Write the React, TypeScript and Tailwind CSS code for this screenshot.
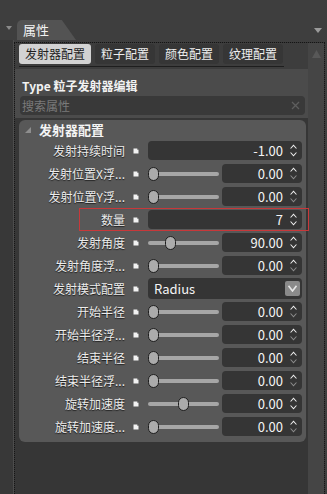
type Row = {
  label: string;
  kind: "num" | "slider" | "select";
  value: string;
  pos?: number;
  downOn?: boolean;
  focus?: boolean;
};

const rows: Row[] = [
  { label: "发射持续时间", kind: "num", value: "-1.00", downOn: true },
  { label: "发射位置X浮...", kind: "slider", value: "0.00", pos: 0 },
  { label: "发射位置Y浮...", kind: "slider", value: "0.00", pos: 0 },
  { label: "数量", kind: "num", value: "7", downOn: true, focus: true },
  { label: "发射角度", kind: "slider", value: "90.00", pos: 0.28, downOn: true },
  { label: "发射角度浮...", kind: "slider", value: "0.00", pos: 0 },
  { label: "发射模式配置", kind: "select", value: "Radius" },
  { label: "开始半径", kind: "slider", value: "0.00", pos: 0 },
  { label: "开始半径浮...", kind: "slider", value: "0.00", pos: 0 },
  { label: "结束半径", kind: "slider", value: "0.00", pos: 0 },
  { label: "结束半径浮...", kind: "slider", value: "0.00", pos: 0 },
  { label: "旋转加速度", kind: "slider", value: "0.00", pos: 0.5, downOn: true },
  { label: "旋转加速度...", kind: "slider", value: "0.00", pos: 0 },
];

function Spinner({ downOn }: { downOn?: boolean }) {
  return (
    <svg width="9" height="15" viewBox="0 0 9 15" className="shrink-0">
      <path d="M1 5.5 L4.5 1.5 L8 5.5 L6.8 5.5 L4.5 3 L2.2 5.5 Z" fill="#f0f0f0" />
      <path
        d="M1 9.5 L4.5 13.5 L8 9.5 L6.8 9.5 L4.5 12 L2.2 9.5 Z"
        fill={downOn ? "#f0f0f0" : "#8c8c8c"}
      />
    </svg>
  );
}

function NumBox({ value, downOn }: { value: string; downOn?: boolean }) {
  return (
    <div className="flex-1 h-[19px] bg-[#353535] rounded-[4px] flex items-center justify-end pr-[4px] gap-[6px]">
      <span className="text-[13px] text-[#f4f4f4] leading-none">{value}</span>
      <Spinner downOn={downOn} />
    </div>
  );
}

function Pin() {
  return (
    <svg width="6" height="6" viewBox="0 0 6 6" className="shrink-0">
      <path d="M0.5 0.5 L4 0.5 L5.5 2 L5.5 5.5 L0.5 5.5 Z" fill="#f2f2f2" />
      <path d="M4 0.5 L5.5 2 L4 2 Z" fill="#9a9a9a" />
    </svg>
  );
}

function Slider({ pos }: { pos: number }) {
  return (
    <div className="relative w-[71px] h-[14px] flex items-center shrink-0">
      <div className="w-full h-[4px] rounded-full bg-[#a6a6a6]" />
      <div
        className="absolute top-[0px] w-[11px] h-[14px] rounded-full bg-[#ababab] border border-[#1e1e1e]"
        style={{ left: `${pos * 60}px` }}
      />
    </div>
  );
}

function PropRow({ row }: { row: Row }) {
  return (
    <div className="relative h-[21px] flex items-center">
      <div className="w-[106px] text-right text-[12px] text-[#ececec] whitespace-nowrap [text-shadow:0_1px_1px_#1a1a1a]">
        {row.label}
      </div>
      <div className="w-[8px]" />
      <Pin />
      <div className="w-[9px]" />
      <div className="w-[154px] flex items-center gap-[3px]">
        {row.kind === "num" && <NumBox value={row.value} downOn={row.downOn} />}
        {row.kind === "slider" && (
          <>
            <Slider pos={row.pos ?? 0} />
            <NumBox value={row.value} downOn={row.downOn} />
          </>
        )}
        {row.kind === "select" && (
          <div className="flex-1 h-[21px] bg-[#353535] rounded-[4px] flex items-center pl-[6px] pr-[2px]">
            <span className="flex-1 text-[13px] text-[#f4f4f4]">{row.value}</span>
            <div className="w-[15px] h-[15px] rounded-[2px] bg-[#8a8a8a] flex items-center justify-center">
              <svg width="9" height="7" viewBox="0 0 9 7">
                <path d="M0.5 0.8 L4.5 6 L8.5 0.8" fill="none" stroke="#e6e6e6" strokeWidth="1.6" />
              </svg>
            </div>
          </div>
        )}
      </div>
      {row.focus && (
        <div className="absolute left-[60px] right-[-3px] top-[-1px] bottom-[-1px] border border-[#c8383a]" />
      )}
    </div>
  );
}

export default function App() {
  return (
    <div className="w-[327px] h-[494px] bg-[#3e3e3e] flex flex-col overflow-hidden font-['Noto_Sans_CJK_SC','Liberation_Sans',sans-serif]">
      {/* Top strip */}
      <div className="h-[20px] shrink-0" />
      <div className="h-[20px] shrink-0 flex items-end relative">
        <svg width="6" height="4" viewBox="0 0 6 4" className="absolute left-[6px] top-[6px]">
          <path d="M0 0 L6 0 L3 4 Z" fill="#8a8a8a" />
        </svg>
        <div className="ml-[17px] w-[59px] h-[20px] bg-[#535353] rounded-tl-[5px] [clip-path:polygon(0_0,76%_0,100%_100%,0_100%)] text-[13px] text-[#f2f2f2] pl-[6px] leading-[20px]">
          属性
        </div>
        <svg width="8" height="5" viewBox="0 0 8 5" className="absolute right-[5px] top-[8px]">
          <path d="M0 0 L8 0 L4 5 Z" fill="#9a9a9a" />
        </svg>
      </div>

      {/* Body */}
      <div className="flex-1 flex min-h-0">
        <div className="w-[14px] shrink-0 bg-[#383838] border-r border-[#4c4c4c]" />
        <div className="flex-1 flex border-l border-t border-r border-dotted border-[#151515] mt-[2px] mr-[2px] bg-[#363636]">
          {/* Main column */}
          <div className="w-[293px] flex flex-col">
            {/* Tabs */}
            <div className="h-[26px] bg-[#3d3d3d] pl-[4px] pr-[24px] pt-[1px]">
              <div className="flex gap-[4px]">
                <div className="h-[20px] px-[6px] rounded-[3px] bg-[#d2d2d2] text-[12px] text-[#1e1e1e] leading-[20px]">
                  发射器配置
                </div>
                {["粒子配置", "颜色配置", "纹理配置"].map((t) => (
                  <div
                    key={t}
                    className="h-[20px] w-[60px] text-center rounded-[3px] bg-[#363636] text-[12px] text-[#eeeeee] leading-[20px]"
                  >
                    {t}
                  </div>
                ))}
              </div>
              <div className="mt-[2px] h-[1px] bg-[#1e1e1e]" />
            </div>

            {/* Type + search */}
            <div className="bg-[#4b4b4b] pt-[8px] pb-[3px] px-[5px]">
              <div className="text-[12px] font-bold text-[#f2f2f2] leading-[18px] pl-[2px]">
                Type 粒子发射器编辑
              </div>
              <div className="mt-[1px] h-[19px] bg-[#393939] rounded-[4px] flex items-center pl-[2px] pr-[5px] mr-[-2px]">
                <span className="flex-1 text-[12px] text-[#7a7a7a]">搜索属性</span>
                <svg width="9" height="9" viewBox="0 0 9 9">
                  <path d="M1 1 L8 8 M8 1 L1 8" stroke="#5e5e5e" strokeWidth="1.3" />
                </svg>
              </div>
            </div>

            {/* Section */}
            <div className="mt-[2px] ml-[4px] mr-[2px] bg-[#585858] rounded-[6px] pb-[5px]">
              <div className="h-[20px] flex items-center pl-[6px]">
                <svg width="6" height="6" viewBox="0 0 6 6">
                  <path d="M6 0 L6 6 L0 6 Z" fill="#8e8e8e" />
                </svg>
                <span className="ml-[8px] text-[13px] font-bold text-[#f4f4f4]">发射器配置</span>
              </div>
              <div className="flex flex-col gap-[2px]">
                {rows.map((r) => (
                  <PropRow key={r.label} row={r} />
                ))}
              </div>
            </div>
          </div>

          {/* Scrollbar */}
          <div className="flex-1 bg-[#454545] flex justify-center pt-[7px]">
            <svg width="9" height="8" viewBox="0 0 9 8">
              <path d="M0 8 L4.5 0 L9 8 Z" fill="#585858" />
            </svg>
          </div>
        </div>
      </div>
    </div>
  );
}
